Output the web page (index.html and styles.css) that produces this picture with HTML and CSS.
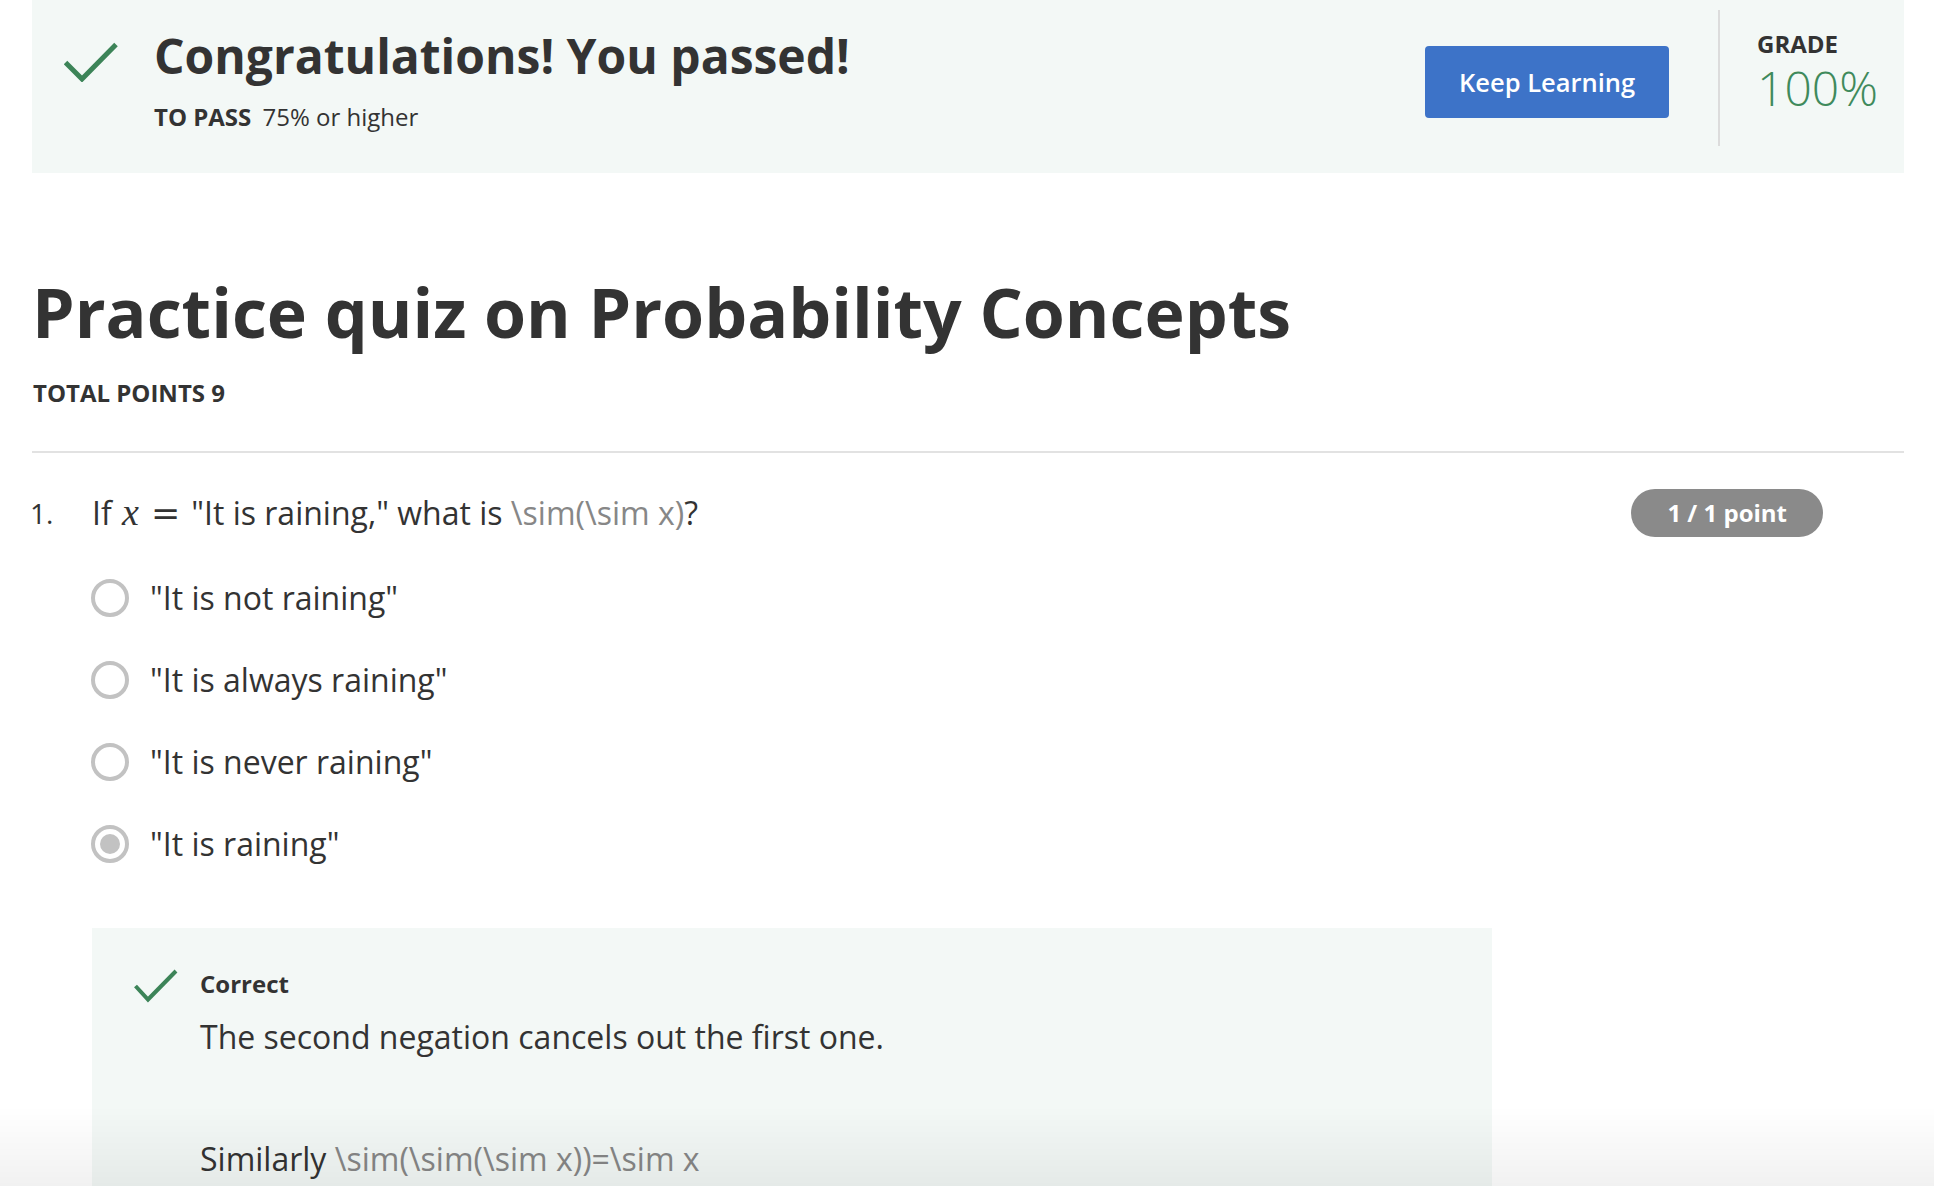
FILE: index.html
```html
<!DOCTYPE html>
<html lang="en">
<head>
<meta charset="utf-8">
<title>Practice quiz on Probability Concepts</title>
<link rel="stylesheet" href="styles.css">
</head>
<body>
<div class="page">
  <section class="banner">
    <div class="banner-left">
      <svg class="banner-check" width="54" height="40" viewBox="0 0 54 40"><polyline points="1.5,20.5 18,37 52,2.5" fill="none" stroke="#3c8458" stroke-width="5"/></svg>
      <div class="banner-text">
        <h1 class="banner-title">Congratulations! You passed!</h1>
        <div class="pass"><span class="pass-label">TO PASS</span> 75% or higher</div>
      </div>
    </div>
    <div class="banner-right">
      <button class="btn-primary">Keep Learning</button>
      <div class="vdivider"></div>
      <div class="grade">
        <div class="grade-label">GRADE</div>
        <div class="grade-value">100%</div>
      </div>
    </div>
  </section>

  <h2 class="quiz-title">Practice quiz on Probability Concepts</h2>
  <div class="total">TOTAL POINTS 9</div>
  <div class="rule"></div>

  <div class="question">
    <div class="q-head">
      <div class="q-num">1.</div>
      <div class="q-text">If <span class="math"><span class="math-var">x</span><span class="math-op">=</span></span>"It is raining," what is <span class="latex">\sim(\sim x)</span>?</div>
      <div class="badge">1 / 1 point</div>
    </div>
    <div class="options">
      <div class="option"><span class="radio"></span><span class="opt-text">"It is not raining"</span></div>
      <div class="option"><span class="radio"></span><span class="opt-text">"It is always raining"</span></div>
      <div class="option"><span class="radio"></span><span class="opt-text">"It is never raining"</span></div>
      <div class="option"><span class="radio radio-checked"></span><span class="opt-text">"It is raining"</span></div>
    </div>
    <div class="feedback">
      <svg class="fb-check" width="44" height="34" viewBox="0 0 44 34"><polyline points="1.5,17 14,30.5 42,2" fill="none" stroke="#3c8458" stroke-width="4"/></svg>
      <div class="fb-body">
        <div class="fb-title">Correct</div>
        <p class="fb-text">The second negation cancels out the first one.</p>
        <p class="fb-text fb-gap">Similarly <span class="latex">\sim(\sim(\sim x))=\sim x</span></p>
      </div>
    </div>
  </div>
</div>
<div class="bottom-fade"></div>
</body>
</html>
```

FILE: styles.css
```css
html, body {
  margin: 0;
  padding: 0;
  background: #ffffff;
}
body {
  font-family: "Open Sans", "Noto Sans", sans-serif;
  color: #333333;
  overflow: hidden;
  height: 1186px;
}
.page {
  padding: 0 30px 0 32px;
}

/* Banner */
.banner {
  background: #f3f8f6;
  height: 173px;
  display: flex;
  justify-content: space-between;
  box-sizing: border-box;
  padding: 0 26px 0 32px;
}
.banner-left {
  display: flex;
  align-items: flex-start;
}
.banner-check {
  margin-top: 42px;
  flex: none;
}
.banner-text {
  margin-left: 36px;
  padding-top: 28px;
}
.banner-title {
  margin: 0;
  font-size: 48px;
  line-height: 56px;
  font-weight: 700;
  color: #333333;
}
.pass {
  margin-top: 17px;
  font-size: 24px;
  line-height: 32px;
}
.pass-label {
  font-weight: 700;
  margin-right: 5px;
}
.banner-right {
  display: flex;
  align-items: flex-start;
}
.btn-primary {
  margin-top: 46px;
  width: 244px;
  height: 72px;
  border: none;
  border-radius: 4px;
  background: #3d73c8;
  color: #ffffff;
  font-family: "Open Sans", sans-serif;
  font-size: 25.5px;
  font-weight: 600;
  padding: 0;
}
.vdivider {
  margin-top: 10px;
  margin-left: 49px;
  width: 2px;
  height: 136px;
  background: #dcdcdc;
}
.grade {
  margin-left: 37px;
  padding-top: 30px;
}
.grade-label {
  font-size: 24px;
  line-height: 28px;
  font-weight: 700;
}
.grade-value {
  margin-top: 1px;
  font-size: 48px;
  line-height: 58px;
  font-weight: 300;
  color: #3f8a5c;
}

/* Title */
.quiz-title {
  margin: 99px 0 0 0;
  font-size: 68px;
  line-height: 80px;
  font-weight: 700;
}
.total {
  margin: 25px 0 0 1px;
  font-size: 24px;
  line-height: 32px;
  font-weight: 700;
}
.rule {
  margin-top: 42px;
  height: 2px;
  background: #e2e2e2;
}

/* Question */
.question {
  margin-top: 38px;
}
.q-head {
  display: flex;
  align-items: flex-start;
}
.q-num {
  width: 60px;
  flex: none;
  font-size: 28px;
  line-height: 44px;
  margin-left: -2px;
  padding-right: 2px;
  box-sizing: content-box;
}
.q-text {
  flex: 1;
  font-size: 32px;
  line-height: 44px;
}
.math-var {
  font-family: "Liberation Serif", "DejaVu Serif", serif;
  font-style: italic;
  font-size: 38px;
  line-height: 1;
  margin-left: 2px;
}
.math-op {
  font-family: "DejaVu Serif", "Liberation Serif", serif;
  font-size: 35px;
  line-height: 1;
  margin: 0 11px 0 12px;
}
.latex {
  color: #878787;
}
.badge {
  flex: none;
  margin: -2px 81px 0 0;
  height: 48px;
  line-height: 48px;
  padding: 0 36px;
  border-radius: 24px;
  background: #8a8a8a;
  color: #ffffff;
  font-size: 24px;
  font-weight: 700;
}

.options {
  margin: 20px 0 0 59px;
}
.option {
  display: flex;
  align-items: center;
  height: 82px;
}
.radio {
  flex: none;
  width: 38px;
  height: 38px;
  box-sizing: border-box;
  border: 4px solid #c2c2c2;
  border-radius: 50%;
  position: relative;
}
.radio-checked::after {
  content: "";
  position: absolute;
  left: 5px;
  top: 5px;
  width: 20px;
  height: 20px;
  border-radius: 50%;
  background: #c2c2c2;
}
.opt-text {
  margin-left: 21px;
  font-size: 32px;
  line-height: 44px;
}

/* Feedback */
.feedback {
  margin: 43px 0 0 60px;
  width: 1400px;
  min-height: 300px;
  background: #f3f8f6;
  box-sizing: border-box;
  padding: 41px 0 0 42px;
  display: flex;
  align-items: flex-start;
}
.fb-check {
  flex: none;
}
.fb-body {
  margin-left: 22px;
}
.fb-title {
  font-size: 24px;
  line-height: 30px;
  font-weight: 700;
}
.fb-text {
  margin: 16px 0 0 0;
  font-size: 32px;
  line-height: 44px;
}
.fb-gap {
  margin-top: 78px;
}

.bottom-fade {
  position: fixed;
  left: 0;
  right: 0;
  bottom: 0;
  height: 80px;
  pointer-events: none;
  background: linear-gradient(to bottom, rgba(0,0,0,0), rgba(0,0,0,0.055));
}
```
